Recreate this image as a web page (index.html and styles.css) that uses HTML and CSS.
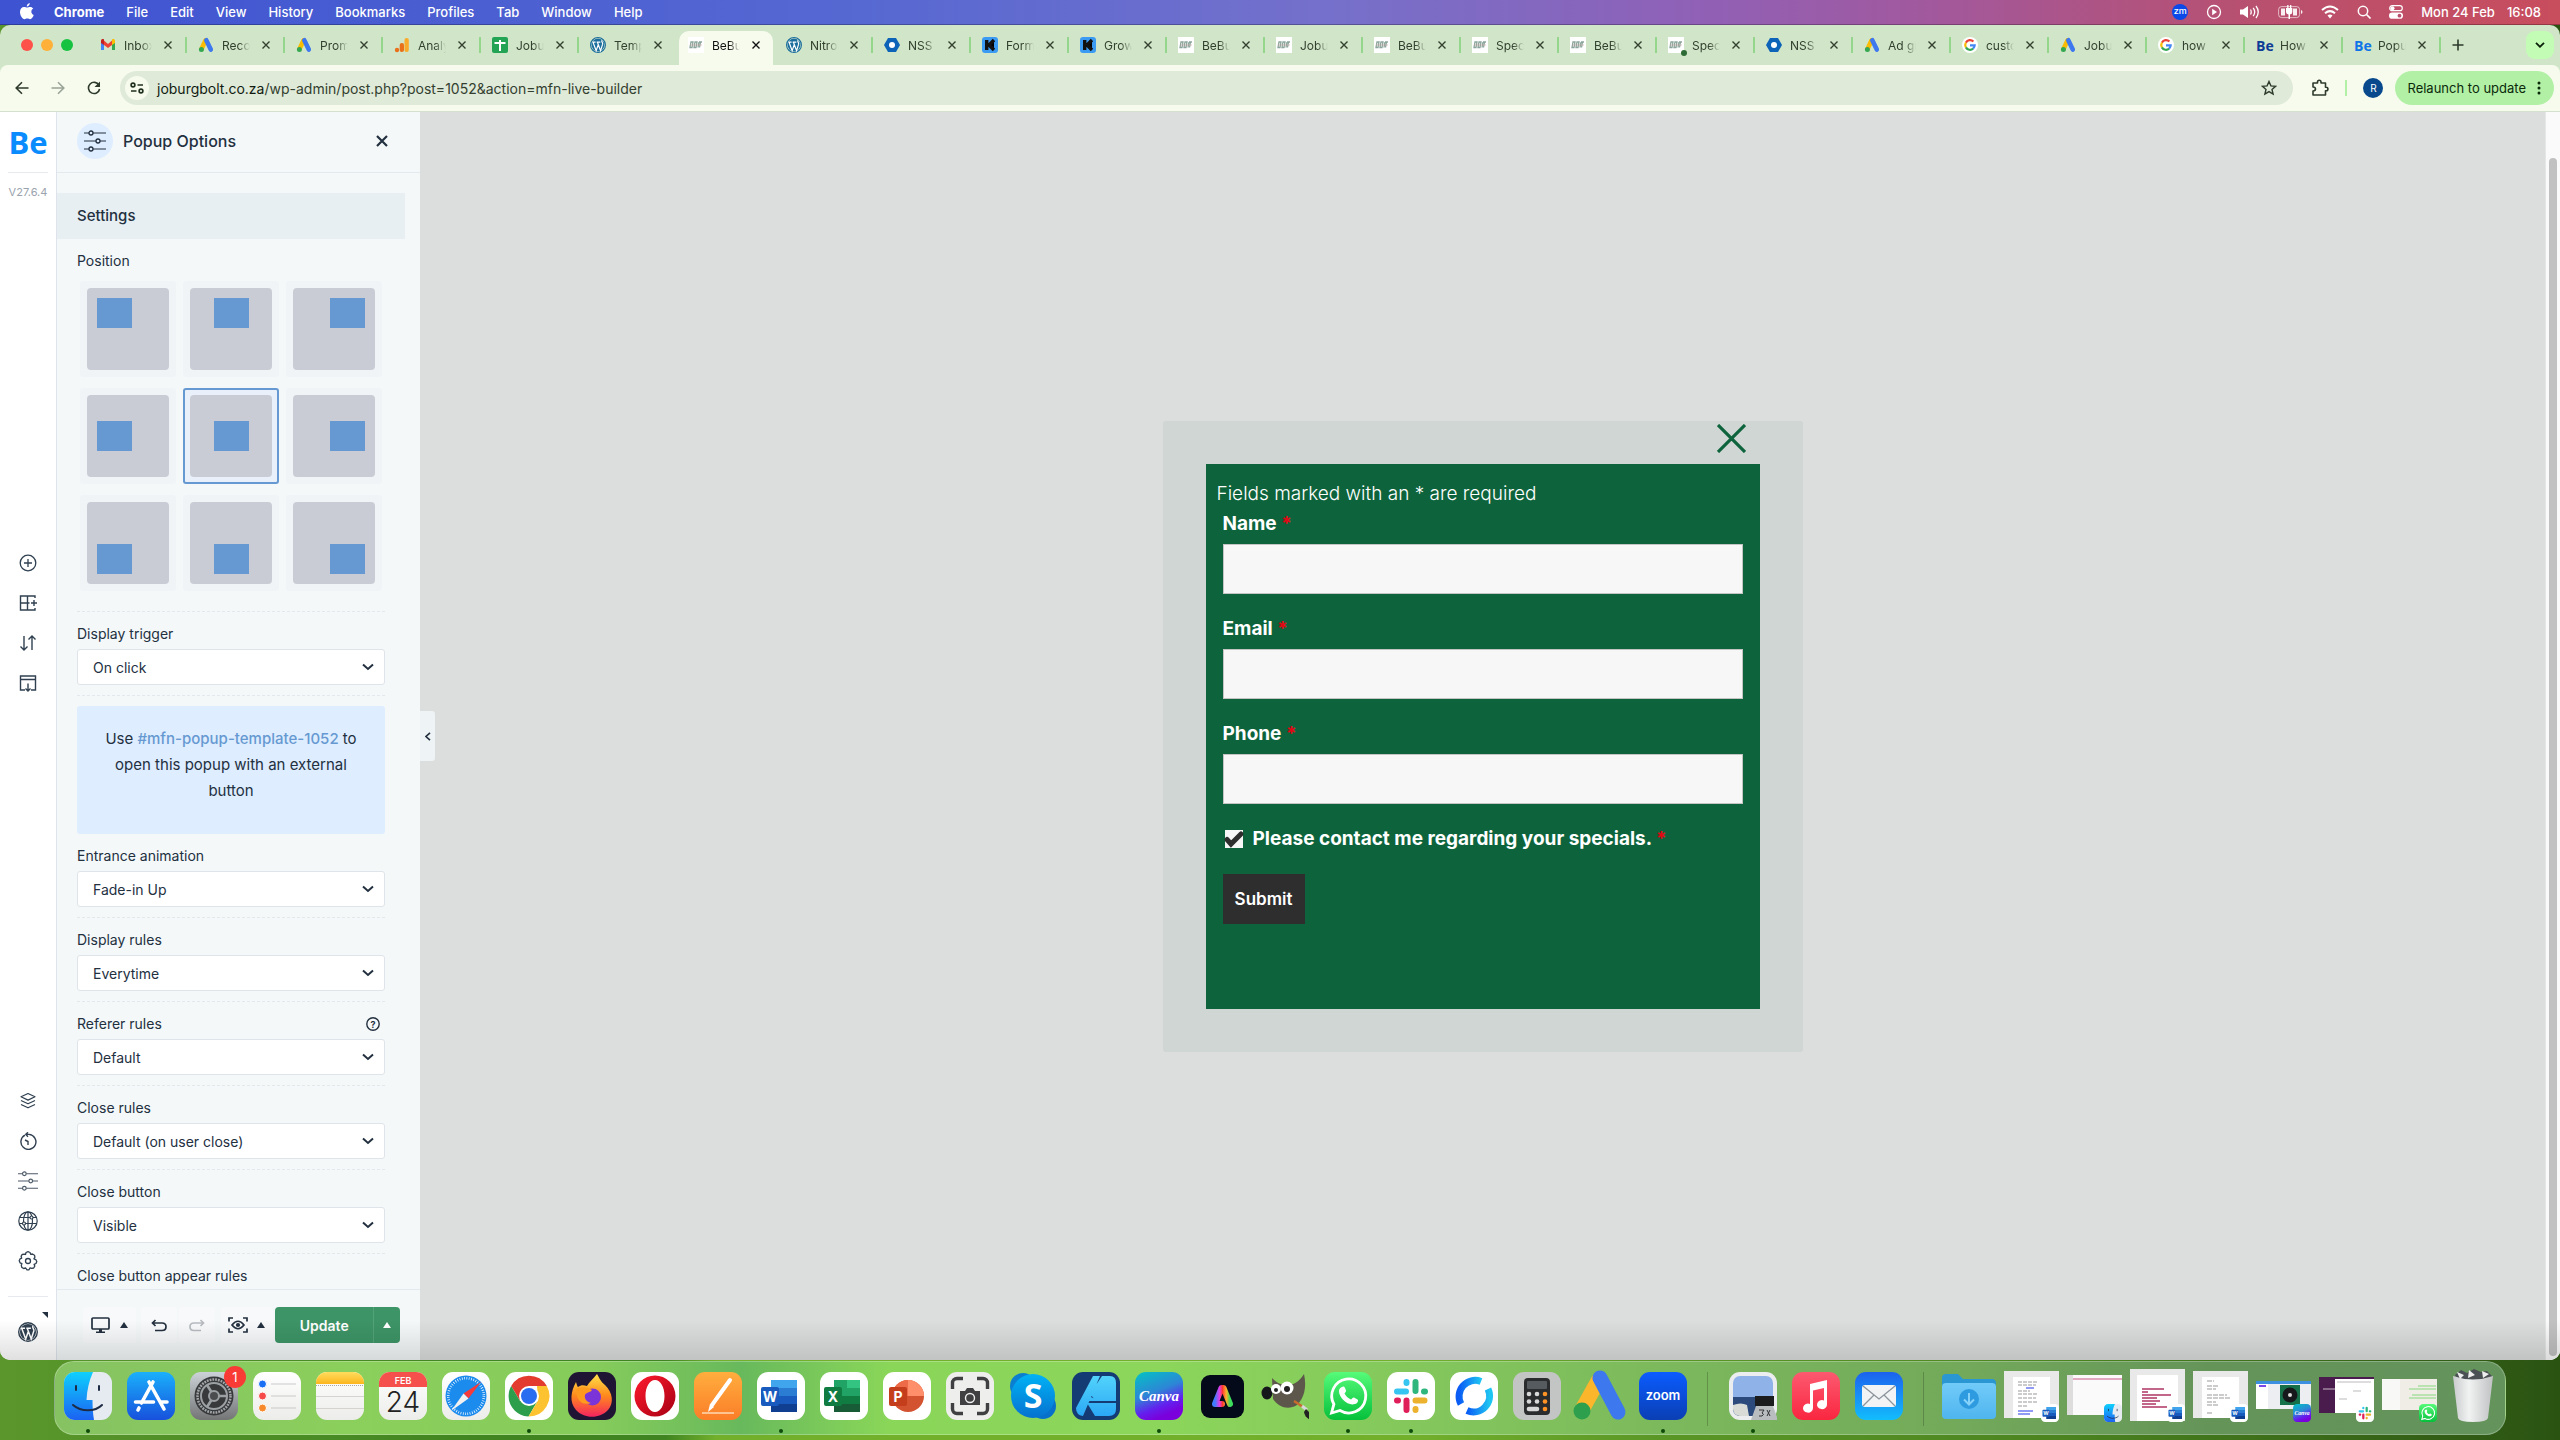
FILE: index.html
```html
<!DOCTYPE html>
<html lang="en">
<head>
<meta charset="utf-8">
<title>BeBuilder - Popup Options</title>
<link rel="stylesheet" href="styles.css">
</head>
<body>
<svg class="defs" aria-hidden="true">
  <defs>
    <linearGradient id="gFinder" x2="0" y2="1"><stop stop-color="#0fd0fd"/><stop offset="1" stop-color="#1b62f2"/></linearGradient>
    <linearGradient id="gStore" x2="0" y2="1"><stop stop-color="#1ab0fb"/><stop offset="1" stop-color="#1751dd"/></linearGradient>
    <linearGradient id="gGrey" x2="0" y2="1"><stop stop-color="#ccd3d8"/><stop offset="1" stop-color="#737475"/></linearGradient>
    <linearGradient id="gPaper" x2="0" y2="1"><stop stop-color="#fff"/><stop offset="1" stop-color="#ececea"/></linearGradient>
    <linearGradient id="gYellow" x2="0" y2="1"><stop stop-color="#ffdc5e"/><stop offset="1" stop-color="#fcb71e"/></linearGradient>
    <linearGradient id="gFox" x2="0" y2="1"><stop stop-color="#ffe14a"/><stop offset=".5" stop-color="#ff8a1c"/><stop offset="1" stop-color="#f4235f"/></linearGradient>
    <linearGradient id="gOpera" x2="1" y2="1"><stop stop-color="#ff1b2d"/><stop offset="1" stop-color="#a70014"/></linearGradient>
    <linearGradient id="gPages" x2="0" y2="1"><stop stop-color="#ffae3e"/><stop offset="1" stop-color="#fb7d28"/></linearGradient>
    <linearGradient id="gSkype" x2="0" y2="1"><stop stop-color="#00b2f5"/><stop offset="1" stop-color="#0672d0"/></linearGradient>
    <linearGradient id="gAff" x2="0" y2="1"><stop stop-color="#52d3fb"/><stop offset="1" stop-color="#2ba8f5"/></linearGradient>
    <linearGradient id="gCanva" x2=".4" y2="1"><stop stop-color="#03c3c4"/><stop offset=".5" stop-color="#2d86d6"/><stop offset=".8" stop-color="#6320ee"/><stop offset="1" stop-color="#7a00dc"/></linearGradient>
    <linearGradient id="gExpress" x2="1" y2="0"><stop stop-color="#3f7bff"/><stop offset=".3" stop-color="#e23ce4"/><stop offset=".5" stop-color="#ff3a33"/><stop offset=".75" stop-color="#ffb02c"/><stop offset="1" stop-color="#3ddc5c"/></linearGradient>
    <linearGradient id="gWa" x2="0" y2="1"><stop stop-color="#56fb79"/><stop offset="1" stop-color="#05c03b"/></linearGradient>
    <linearGradient id="gRc" x2="1" y2="0"><stop stop-color="#0a5cf5"/><stop offset="1" stop-color="#1fc5f2"/></linearGradient>
    <linearGradient id="gZoom" x2="0" y2="1"><stop stop-color="#0b5cff"/><stop offset="1" stop-color="#0a3fb4"/></linearGradient>
    <linearGradient id="gMusic" x2="0" y2="1"><stop stop-color="#fc5a70"/><stop offset="1" stop-color="#fa2640"/></linearGradient>
    <linearGradient id="gMail" x2="0" y2="1"><stop stop-color="#1c62ee"/><stop offset="1" stop-color="#12bdfd"/></linearGradient>
    <linearGradient id="gFolder" x2="0" y2="1"><stop stop-color="#72cbf9"/><stop offset="1" stop-color="#4fb5ee"/></linearGradient>
    <linearGradient id="gTrash" x2="1" y2="0"><stop stop-color="#c9cbcc"/><stop offset=".4" stop-color="#f1f2f2"/><stop offset="1" stop-color="#bfc1c2"/></linearGradient>
  </defs>

  <symbol id="f-gmail" viewBox="0 0 16 16"><path fill="#4285f4" d="M1 4v9h3V7z"/><path fill="#34a853" d="M15 4v9h-3V7z"/><path fill="#ea4335" d="M4 3.500 8 7l4-3.500V8L8 11 4 8z"/><path fill="#c5221f" d="M1 4c0-2 2-2.500 3-1.500V8L1 6z"/><path fill="#fbbc04" d="M15 4c0-2-2-2.500-3-1.500V8l3-2z"/></symbol>
  <symbol id="f-ads" viewBox="0 0 16 16"><path stroke="#fbbc04" stroke-width="4.600" stroke-linecap="round" d="M7.500 3.500 3.500 12"/><path stroke="#3d78ee" stroke-width="4.600" stroke-linecap="round" d="M8.300 3.200 12.800 12.600"/><circle cx="3.400" cy="12.600" r="2.500" fill="#34a853"/></symbol>
  <symbol id="f-analytics" viewBox="0 0 16 16"><rect x="10.500" y="1" width="4.300" height="14" rx="2" fill="#f9ab2c"/><rect x="5.700" y="6" width="4.300" height="9" rx="2" fill="#e8711a"/><circle cx="3" cy="13" r="2.200" fill="#e8711a"/></symbol>
  <symbol id="f-sheets" viewBox="0 0 16 16"><rect width="16" height="16" rx="2" fill="#23a455"/><path stroke="#fff" stroke-width="2" d="M2.500 6h11M8 3v11"/></symbol>
  <symbol id="f-wp" viewBox="0 0 20 20"><circle cx="10" cy="10" r="9.300" fill="none" stroke="currentColor" stroke-width="1.400"/><circle cx="10" cy="10" r="8" fill="currentColor"/><path fill="none" stroke="#fff" stroke-width="1.500" d="M3 6.300h4M8.300 6.300h4.600M3.800 6.500 7.700 17 10.300 9.500M9.300 6.500 13.200 17 15.800 9c.5-2-2-3-.8-5"/></symbol>
  <symbol id="f-bolt" viewBox="0 0 16 16"><rect width="16" height="16" fill="#fff"/><path fill="none" stroke="#8aa59b" stroke-width="1.300" d="M2 10.500 3 5h2l-1 5.500zM6 10.500 7 5h2l-1 5.500zM10 10.500l1-5.500M11 5h3M12.500 5l-1 5.500"/><path stroke="#c9a6a6" stroke-width=".6" d="M2 8h12"/></symbol>
  <symbol id="f-nss" viewBox="0 0 16 16"><path fill="#0c63b8" d="M4 1h8l4 7-4 7H4L0 8z"/><circle cx="8" cy="8" r="3" fill="#fff"/></symbol>
  <symbol id="f-k" viewBox="0 0 16 16"><rect width="16" height="16" rx="3" fill="#3b9bf3"/><path stroke="#111" stroke-width="3.400" d="M4.700 3v10M12 3 7 8l5 5"/></symbol>
  <symbol id="f-google" viewBox="0 0 16 16"><circle cx="8" cy="8" r="8" fill="#fff"/><g fill="none" stroke-width="2.200"><path stroke="#ea4335" d="M3.900 5.600a4.700 4.700 0 0 1 7.500-1"/><path stroke="#fbbc04" d="M3.900 5.600a4.700 4.700 0 0 0 0 4.800"/><path stroke="#34a853" d="M3.900 10.400a4.700 4.700 0 0 0 7.200 1.200"/><path stroke="#4285f4" d="M8 8.300h4.700a4.700 4.700 0 0 1-1.600 3.300"/></g></symbol>
  <symbol id="i-x" viewBox="0 0 8 8"><path stroke="currentColor" stroke-width="1.400" d="m.5.500 7 7M7.500.500l-7 7"/></symbol>
  <symbol id="i-sliders" viewBox="0 0 22 22"><path stroke="currentColor" stroke-width="1.200" d="M0 3h5M9 3h13M0 11h12M16 11h6M0 19h5M9 19h13"/><g fill="none" stroke="currentColor" stroke-width="1.300"><circle cx="7" cy="3" r="2"/><circle cx="14" cy="11" r="2"/><circle cx="7" cy="19" r="2"/></g></symbol>
  <symbol id="i-up" viewBox="0 0 8 6"><path fill="currentColor" d="M4 0 8 6H0z"/></symbol>

  <symbol id="a-finder" viewBox="0 0 48 48"><rect width="48" height="48" rx="11" fill="#e6ebf2"/><path fill="url(#gFinder)" d="M11 0h18c-4 9-6 18-6.500 28h6c0 8 .5 14 1.500 20H11A11 11 0 0 1 0 37V11A11 11 0 0 1 11 0z"/><path fill="none" stroke="#1d2b45" stroke-width="2" stroke-linecap="round" d="M12 14v4M35 14v4M9 33c8 7 22 7 29 0"/></symbol>
  <symbol id="a-word" viewBox="0 0 48 48"><rect width="48" height="48" rx="11" fill="#fff"/><path fill="#41a5ee" d="M14 8h26v8H14z"/><path fill="#2b7cd3" d="M14 16h26v8H14z"/><path fill="#185abd" d="M14 24h26v8H14z"/><path fill="#103f91" d="M14 32h26v8H14z"/><rect x="4" y="15" width="18" height="19" rx="2" fill="#185abd"/><text x="13" y="29.500" text-anchor="middle" font-family="Inter" font-weight="700" font-size="14" fill="#fff">W</text></symbol>
  <symbol id="a-canva" viewBox="0 0 48 48"><rect width="48" height="48" rx="11" fill="url(#gCanva)"/><text x="24" y="29" text-anchor="middle" font-family="Liberation Serif" font-style="italic" font-weight="700" font-size="15" fill="#fff">Canva</text></symbol>
  <symbol id="a-wa" viewBox="0 0 48 48"><rect width="48" height="48" rx="11" fill="url(#gWa)"/><path fill="none" stroke="#fff" stroke-width="2.800" d="m7.500 41 2.400-8.800A17 17 0 1 1 16 38.500z"/><path fill="#fff" d="M18 15c1.500-1 2.500-.5 3 1l1 2.500c.3 1-.8 2-1.500 3 1.500 3 4 5 6.500 6 1-.8 2-2.500 3-2l3.500 2c1 .5.500 2.500-.5 3.500-7 5-18-4-18-12 0-2 1.500-3.500 3-4z"/></symbol>
  <symbol id="a-slack" viewBox="0 0 48 48"><rect width="48" height="48" rx="11" fill="#fff"/><g stroke-width="6" stroke-linecap="round"><path stroke="#36c5f0" d="M10 19.500h9M19.500 10v1"/><path stroke="#2eb67d" d="M28.500 10v9M38 19.500h-1"/><path stroke="#ecb22e" d="M28.500 28.500h9M28.500 38v-1"/><path stroke="#e01e5a" d="M19.500 28.500V38M10 28.500h1"/></g></symbol>
</svg>

<header class="menubar">
  <svg class="apple" viewBox="0 0 14 17" aria-label="Apple"><path fill="#fff" d="M9.800 0c.1 1.700-1.200 3.400-3 3.500C6.600 1.900 8.100.2 9.800 0zM7.200 4.600c.8 0 1.600-.7 3-.7 1.300 0 2.400.7 3 1.600-2.800 1.600-2.200 5.400.5 6.500-.6 1.800-2 4.200-3.600 4.200-1 0-1.500-.6-2.800-.6s-1.900.6-2.800.6C2.300 16.200 0 12.400 0 9c0-3.200 2-5 4-5 1.300 0 2.300.6 3.200.6z"/></svg>
  <nav class="menus">
    <b>Chrome</b><span>File</span><span>Edit</span><span>View</span><span>History</span><span>Bookmarks</span><span>Profiles</span><span>Tab</span><span>Window</span><span>Help</span>
  </nav>
  <div class="status">
    <span class="zm">zm</span>
    <svg width="16" height="16" viewBox="0 0 16 16"><circle cx="8" cy="8" r="6.500" fill="none" stroke="#fff" stroke-width="1.300"/><path fill="#fff" d="m6.200 4.800 4.800 3.200-4.800 3.200z"/></svg>
    <svg width="20" height="16" viewBox="0 0 20 16"><path fill="#fff" d="M0 5.500h3L8 2v12l-5-3.500H0z"/><path fill="none" stroke="#fff" stroke-width="1.300" d="M10.500 5.500q1.500 2.500 0 5M13.200 3.800q3 4.200 0 8.400M16 2q4.500 6 0 12"/></svg>
    <svg width="25" height="14" viewBox="0 0 25 14"><rect x=".6" y="1.600" width="21" height="11" rx="3" fill="none" stroke="#fff" stroke-opacity=".6"/><path fill="#fff" fill-opacity=".9" d="M3 3.500h4v7H3zM15 3.500h4v7h-4zM23 5v4q1.500-.5 1.500-2T23 5z"/><path fill="#fff" d="M9.200 0h1.300v3h1.500V0h1.300v3h1v4q0 2-2.300 2.500V14h-1.500V9.500Q8 9 8 7V3h1.200z"/></svg>
    <svg width="18" height="14" viewBox="0 0 18 14"><g fill="none" stroke="#fff" stroke-width="2"><path d="M1 5q8-7 16 0M4 8.300q5-4.300 10 0"/></g><path fill="#fff" d="M6.500 10.500q2.500-2 5 0L9 13.500z"/></svg>
    <svg width="14" height="14" viewBox="0 0 14 14"><circle cx="6" cy="6" r="4.700" fill="none" stroke="#fff" stroke-width="1.500"/><path stroke="#fff" stroke-width="1.600" d="m9.500 9.500 4 4"/></svg>
    <svg width="14" height="14" viewBox="0 0 14 14"><rect x=".7" y=".7" width="12.600" height="5" rx="2.500" fill="none" stroke="#fff" stroke-width="1.200"/><circle cx="3.500" cy="3.200" r="2" fill="#fff"/><rect y="7.500" width="14" height="6.300" rx="3.100" fill="#fff"/><circle cx="10.500" cy="10.700" r="1.900" fill="#b8506f"/></svg>
    <span class="clock"><span>Mon 24 Feb</span><span>16:08</span></span>
  </div>
</header>

<div class="window">
  <div class="tabstrip">
    <div class="lights"><i class="red"></i><i class="amber"></i><i class="green"></i></div>
    <div class="tabs" role="tablist">
      <div class="tab" role="tab"><svg><use href="#f-gmail"/></svg><span>Inbox</span><button aria-label="Close tab"><svg><use href="#i-x"/></svg></button></div>
      <div class="tab" role="tab"><svg><use href="#f-ads"/></svg><span>Recor</span><button aria-label="Close tab"><svg><use href="#i-x"/></svg></button></div>
      <div class="tab" role="tab"><svg><use href="#f-ads"/></svg><span>Promo</span><button aria-label="Close tab"><svg><use href="#i-x"/></svg></button></div>
      <div class="tab" role="tab"><svg><use href="#f-analytics"/></svg><span>Analyt</span><button aria-label="Close tab"><svg><use href="#i-x"/></svg></button></div>
      <div class="tab" role="tab"><svg><use href="#f-sheets"/></svg><span>Jobur</span><button aria-label="Close tab"><svg><use href="#i-x"/></svg></button></div>
      <div class="tab before" role="tab"><svg class="wpblue"><use href="#f-wp"/></svg><span>Templ</span><button aria-label="Close tab"><svg><use href="#i-x"/></svg></button></div>
      <div class="tab active" role="tab" aria-selected="true"><svg><use href="#f-bolt"/></svg><span>BeBui</span><button aria-label="Close tab"><svg><use href="#i-x"/></svg></button></div>
      <div class="tab" role="tab"><svg class="wpblue"><use href="#f-wp"/></svg><span>Nitro</span><button aria-label="Close tab"><svg><use href="#i-x"/></svg></button></div>
      <div class="tab" role="tab"><svg><use href="#f-nss"/></svg><span>NSS</span><button aria-label="Close tab"><svg><use href="#i-x"/></svg></button></div>
      <div class="tab" role="tab"><svg><use href="#f-k"/></svg><span>Forms</span><button aria-label="Close tab"><svg><use href="#i-x"/></svg></button></div>
      <div class="tab" role="tab"><svg><use href="#f-k"/></svg><span>Grow</span><button aria-label="Close tab"><svg><use href="#i-x"/></svg></button></div>
      <div class="tab" role="tab"><svg><use href="#f-bolt"/></svg><span>BeBui</span><button aria-label="Close tab"><svg><use href="#i-x"/></svg></button></div>
      <div class="tab" role="tab"><svg><use href="#f-bolt"/></svg><span>Jobur</span><button aria-label="Close tab"><svg><use href="#i-x"/></svg></button></div>
      <div class="tab" role="tab"><svg><use href="#f-bolt"/></svg><span>BeBui</span><button aria-label="Close tab"><svg><use href="#i-x"/></svg></button></div>
      <div class="tab" role="tab"><svg><use href="#f-bolt"/></svg><span>Speci</span><button aria-label="Close tab"><svg><use href="#i-x"/></svg></button></div>
      <div class="tab" role="tab"><svg><use href="#f-bolt"/></svg><span>BeBui</span><button aria-label="Close tab"><svg><use href="#i-x"/></svg></button></div>
      <div class="tab notify" role="tab"><svg><use href="#f-bolt"/></svg><span>Speci</span><button aria-label="Close tab"><svg><use href="#i-x"/></svg></button></div>
      <div class="tab" role="tab"><svg><use href="#f-nss"/></svg><span>NSS</span><button aria-label="Close tab"><svg><use href="#i-x"/></svg></button></div>
      <div class="tab" role="tab"><svg><use href="#f-ads"/></svg><span>Ad gr</span><button aria-label="Close tab"><svg><use href="#i-x"/></svg></button></div>
      <div class="tab" role="tab"><svg><use href="#f-google"/></svg><span>custo</span><button aria-label="Close tab"><svg><use href="#i-x"/></svg></button></div>
      <div class="tab" role="tab"><svg><use href="#f-ads"/></svg><span>Jobur</span><button aria-label="Close tab"><svg><use href="#i-x"/></svg></button></div>
      <div class="tab" role="tab"><svg><use href="#f-google"/></svg><span>how</span><button aria-label="Close tab"><svg><use href="#i-x"/></svg></button></div>
      <div class="tab" role="tab"><b class="be navy">Be</b><span>How</span><button aria-label="Close tab"><svg><use href="#i-x"/></svg></button></div>
      <div class="tab" role="tab"><b class="be">Be</b><span>Popup</span><button aria-label="Close tab"><svg><use href="#i-x"/></svg></button></div>
      <button class="newtab" aria-label="New tab"><svg width="12" height="12" viewBox="0 0 12 12"><path stroke="#2d3a2b" stroke-width="1.600" d="M6 .500v11M.500 6h11"/></svg></button>
    </div>
    <button class="tabmenu" aria-label="Search tabs"><svg width="10" height="6" viewBox="0 0 10 6"><path fill="none" stroke="#0a200a" stroke-width="1.800" d="m1 .8 4 4 4-4"/></svg></button>
  </div>

  <div class="toolbar">
    <div class="navs">
      <svg viewBox="0 0 14 14"><path fill="none" stroke="#2e3b2c" stroke-width="1.600" d="M13.500 7H1.500M7 1.200 1.200 7 7 12.800"/></svg>
      <svg viewBox="0 0 14 14"><path fill="none" stroke="#9ba498" stroke-width="1.600" d="M.500 7h12M7 1.200 12.800 7 7 12.800"/></svg>
      <svg viewBox="0 0 14 14"><path fill="none" stroke="#2e3b2c" stroke-width="1.600" d="M12 4.200A5.600 5.600 0 1 0 12.600 8"/><path fill="#2e3b2c" d="M13 .500V6H7.500z"/></svg>
    </div>
    <div class="urlbar">
      <span class="tune"><svg width="14" height="12" viewBox="0 0 14 12"><g fill="none" stroke="#20301e" stroke-width="1.600"><circle cx="3" cy="3" r="1.900"/><path d="M7.500 3H13M1 9h5.500"/><circle cx="11" cy="9" r="1.900"/></g></svg></span>
      <span class="url"><b>joburgbolt.co.za</b>/wp-admin/post.php?post=1052&amp;action=mfn-live-builder</span>
      <svg class="star" viewBox="0 0 16 16"><path fill="none" stroke="#2e3b2c" stroke-width="1.400" d="m8 1.500 1.900 4.400 4.700.4-3.600 3.100 1.100 4.700L8 11.600l-4.100 2.500L5 9.400 1.400 6.300l4.700-.4z"/></svg>
    </div>
    <svg class="ext" viewBox="0 0 18 18"><path fill="none" stroke="#2e3b2c" stroke-width="1.600" stroke-linejoin="round" d="M2 4h4.500V3a1.700 1.700 0 0 1 3.500 0v1h4.500v4.200h.7a1.700 1.700 0 0 1 0 3.500h-.7V16H2v-4q2.500-.2 2.500-2T2 8z"/></svg>
    <i class="bar"></i>
    <span class="avatar">R</span>
    <button class="relaunch">Relaunch to update <svg width="4" height="14" viewBox="0 0 4 14"><g fill="#0b2a0b"><circle cx="2" cy="2" r="1.500"/><circle cx="2" cy="7" r="1.500"/><circle cx="2" cy="12" r="1.500"/></g></svg></button>
  </div>

  <div class="page">
    <aside class="rail">
      <div class="belogo">Be</div>
      <div class="version">V27.6.4</div>
      <div class="tools">
        <button aria-label="Add"><svg width="18" height="18" viewBox="0 0 18 18"><g fill="none" stroke="#304050" stroke-width="1.300"><circle cx="9" cy="9" r="7.800"/><path d="M9 5v8M5 9h8"/></g></svg></button>
        <button aria-label="Sections"><svg width="18" height="18" viewBox="0 0 18 18"><path fill="none" stroke="#304050" stroke-width="1.400" d="M16 4V2H1.500v14H16v-2M8.500 2v14M1.500 9h9M12 9h6M15 6v6"/></svg></button>
        <button aria-label="Reorder"><svg width="18" height="18" viewBox="0 0 18 18"><path fill="none" stroke="#304050" stroke-width="1.400" d="M5 2v14M1.500 12.500 5 16l3.500-3.500M13 16V2M9.500 5.500 13 2l3.500 3.500"/></svg></button>
        <button aria-label="Templates"><svg width="18" height="18" viewBox="0 0 18 18"><path fill="none" stroke="#304050" stroke-width="1.400" d="M6 16H1.500V2h15v14H12M1.500 5.500h15M9 9.500V17M6.500 14.500 9 17l2.500-2.500"/></svg></button>
      </div>
      <div class="tools low">
        <button aria-label="Navigator"><svg width="18" height="18" viewBox="0 0 18 18"><path fill="none" stroke="#304050" stroke-width="1.200" stroke-linejoin="round" d="m9 1.500 7 3.300-7 3.300-7-3.300zM2 8.500l7 3.300 7-3.300M2 12.500l7 3.300 7-3.300"/></svg></button>
        <button aria-label="History"><svg width="18" height="18" viewBox="0 0 18 18"><path fill="none" stroke="#304050" stroke-width="1.400" d="M7 2.400h3a7.500 7.500 0 1 1-4 .8M9 .300 6.800 2.400 9 4.800M6 8l3 1.500V13"/></svg></button>
        <button aria-label="Options"><svg width="20" height="20" class="dim"><use href="#i-sliders"/></svg></button>
        <button aria-label="Global"><svg width="20" height="20" viewBox="0 0 20 20"><g fill="none" stroke="#304050" stroke-width="1.200"><circle cx="10" cy="10" r="9.200"/><ellipse cx="10" cy="10" rx="4.500" ry="9.200"/><path d="M10 1v18M2 6.500h16M1 12.500h18"/></g><g fill="#fff" stroke="#304050" stroke-width="1.200"><circle cx="13.500" cy="6.500" r="1.500"/><circle cx="6" cy="12.500" r="1.500"/></g></svg></button>
        <button aria-label="Settings"><svg width="20" height="20" viewBox="0 0 20 20"><g fill="none" stroke="#304050" stroke-width="1.300" stroke-linejoin="round"><path d="m8 1.500 2-.8 2 .8.700 1.800 1.700-.3 2.100 1.200.4 2-1 1.600 2 .9.900 1.800-.8 2-1.900.9.700 1.700-1.100 1.900-2.100.4-1.500-.6L11 18.800l-2 .1-1.300-1.900-2 .5-1.900-1.100-.5-2.100.6-1.600-1.800-.9-.9-2 .8-1.900 1.700-.8L3.100 5.300l1.100-1.900 2.100-.3 1.200.4z"/><circle cx="10" cy="10" r="2.500"/></g></svg></button>
      </div>
      <button class="wp" aria-label="WordPress"><svg width="20" height="20"><use href="#f-wp"/></svg></button>
    </aside>

    <section class="panel">
      <header class="panelhead">
        <span class="round"><svg width="22" height="22"><use href="#i-sliders"/></svg></span>
        <h1>Popup Options</h1>
        <button aria-label="Close panel"><svg width="12" height="12" viewBox="0 0 12 12"><path stroke="#23303f" stroke-width="2.200" d="m1 1 10 10M11 1 1 11"/></svg></button>
      </header>
      <div class="panelbody">
        <h2>Settings</h2>
        <fieldset class="position">
          <legend>Position</legend>
          <div class="tiles">
            <label class="t l"><input type="radio" name="pos" aria-label="Top left"><span><i></i></span></label>
            <label class="t c"><input type="radio" name="pos" aria-label="Top center"><span><i></i></span></label>
            <label class="t r"><input type="radio" name="pos" aria-label="Top right"><span><i></i></span></label>
            <label class="m l"><input type="radio" name="pos" aria-label="Center left"><span><i></i></span></label>
            <label class="m c"><input type="radio" name="pos" aria-label="Center" checked><span><i></i></span></label>
            <label class="m r"><input type="radio" name="pos" aria-label="Center right"><span><i></i></span></label>
            <label class="b l"><input type="radio" name="pos" aria-label="Bottom left"><span><i></i></span></label>
            <label class="b c"><input type="radio" name="pos" aria-label="Bottom center"><span><i></i></span></label>
            <label class="b r"><input type="radio" name="pos" aria-label="Bottom right"><span><i></i></span></label>
          </div>
        </fieldset>
        <div class="row"><label for="trigger">Display trigger</label><select id="trigger"><option>On click</option></select></div>
        <p class="info">Use <a href="#mfn-popup-template-1052">#mfn-popup-template-1052</a> to open this popup with an external button</p>
        <div class="row"><label for="anim">Entrance animation</label><select id="anim"><option>Fade-in Up</option></select></div>
        <div class="row"><label for="drules">Display rules</label><select id="drules"><option>Everytime</option></select></div>
        <div class="row"><div class="labelline"><label for="ref">Referer rules</label><svg width="14" height="14" viewBox="0 0 14 14"><circle cx="7" cy="7" r="6.200" fill="none" stroke="#23303f" stroke-width="1.400"/><text x="7" y="10.500" text-anchor="middle" font-family="Inter" font-weight="700" font-size="9" fill="#23303f">?</text></svg></div><select id="ref"><option>Default</option></select></div>
        <div class="row"><label for="crules">Close rules</label><select id="crules"><option>Default (on user close)</option></select></div>
        <div class="row"><label for="cbtn">Close button</label><select id="cbtn"><option>Visible</option></select></div>
        <div class="row"><label for="cappear">Close button appear rules</label><select id="cappear"><option>Default</option></select></div>
      </div>
      <footer class="panelfoot">
        <button class="tool wide" aria-label="Desktop view"><svg width="20" height="17" viewBox="0 0 20 17"><rect x="1" y="1" width="17" height="11" rx="1" fill="none" stroke="#23303f" stroke-width="1.700"/><path fill="#23303f" d="M8 12h3v2.500h3V16H5v-1.500h3z"/></svg><svg width="8" height="6"><use href="#i-up"/></svg></button>
        <button class="tool" aria-label="Undo"><svg width="16" height="13" viewBox="0 0 16 13"><path fill="none" stroke="#23303f" stroke-width="1.700" d="M4.500 1 1.500 4l3 3M1.500 4H11q4 0 4 3.700T11 11.500H4"/></svg></button>
        <button class="tool faded" aria-label="Redo"><svg width="16" height="13" viewBox="0 0 16 13"><path fill="none" stroke="#23303f" stroke-width="1.700" d="m11.500 1 3 3-3 3M14.500 4H5Q1 4 1 7.700t4 3.800h7"/></svg></button>
        <button class="tool wide" aria-label="Preview"><svg width="20" height="16" viewBox="0 0 20 16"><path fill="none" stroke="#23303f" stroke-width="1.700" d="M1 4.500V1h4M15 1h4v3.500M19 11.500V15h-4M5 15H1v-3.500M4 8q6-7.500 12 0-6 7.500-12 0z"/><circle cx="10" cy="8" r="2.100" fill="#23303f"/></svg><svg width="8" height="6"><use href="#i-up"/></svg></button>
        <div class="update"><button>Update</button><button aria-label="Update options"><svg width="8" height="6"><use href="#i-up"/></svg></button></div>
      </footer>
    </section>

    <main class="canvas">
      <button class="collapse" aria-label="Collapse panel"><svg width="6" height="9" viewBox="0 0 6 9"><path fill="none" stroke="#23303f" stroke-width="1.600" d="m5 .8-4 3.700 4 3.700"/></svg></button>
      <div class="popup">
        <div class="popuphead"><button aria-label="Close popup"><svg width="29" height="29" viewBox="0 0 29 29"><path stroke="#0d643c" stroke-width="3.200" d="m1 1 27 27M28 1 1 28"/></svg></button></div>
        <form class="form">
          <p>Fields marked with an * are required</p>
          <div class="field"><label for="name">Name <em>*</em></label><input id="name" type="text"></div>
          <div class="field"><label for="email">Email <em>*</em></label><input id="email" type="email"></div>
          <div class="field"><label for="phone">Phone <em>*</em></label><input id="phone" type="tel"></div>
          <div class="check"><input id="ok" type="checkbox" checked><label for="ok">Please contact me regarding your specials. <em>*</em></label></div>
          <button type="button" class="submit">Submit</button>
        </form>
      </div>
    </main>
    <div class="scroll"><i></i></div>
  </div>
</div>

<footer class="desk">
  <div class="dock">
    <div class="app on"><svg><use href="#a-finder"/></svg></div>
    <div class="app"><svg viewBox="0 0 48 48"><rect width="48" height="48" rx="11" fill="url(#gStore)"/><path stroke="#fff" stroke-width="3.600" stroke-linecap="round" d="M26 10 14.500 31M22 10l15 27M8.500 30h18M34 30h6M12 36l-1 2"/></svg></div>
    <div class="app"><svg viewBox="0 0 48 48"><rect width="48" height="48" rx="11" fill="url(#gGrey)"/><circle cx="24" cy="24" r="19.500" fill="#37393b"/><circle cx="24" cy="24" r="16.500" fill="none" stroke="#a3a6a9" stroke-width="2.500" stroke-dasharray="1.800 1"/><circle cx="24" cy="24" r="13" fill="none" stroke="#9da0a3" stroke-width="2"/><path stroke="#9da0a3" stroke-width="2.600" d="M24 24h13M24 24l-7-11M24 24l-7 11"/><circle cx="24" cy="24" r="5" fill="#4a4c4e" stroke="#9da0a3" stroke-width="2"/></svg><span class="badge">1</span></div>
    <div class="app"><svg viewBox="0 0 48 48"><rect width="48" height="48" rx="11" fill="url(#gPaper)"/><path stroke="#c9c9c9" stroke-width="1.200" d="M18 12h25M18 24h25M18 36h25"/><g stroke="#fff" stroke-width="1"><circle cx="9.500" cy="12" r="4" fill="#1a6ff5"/><circle cx="9.500" cy="24" r="4" fill="#f64a4a"/><circle cx="9.500" cy="36" r="4" fill="#f68a2c"/></g></svg></div>
    <div class="app"><svg viewBox="0 0 48 48"><rect width="48" height="48" rx="11" fill="url(#gPaper)"/><path fill="url(#gYellow)" d="M0 12v-1A11 11 0 0 1 11 0h26a11 11 0 0 1 11 11v1z"/><path stroke="#a9a79f" stroke-width="1" stroke-dasharray="1 1" d="M0 13.500h48"/><path stroke="#d4d3d0" d="M0 24.500h48M0 36.500h48"/></svg></div>
    <div class="app"><svg viewBox="0 0 48 48"><rect width="48" height="48" rx="11" fill="url(#gPaper)"/><path fill="#f5504b" d="M0 15v-4A11 11 0 0 1 11 0h26a11 11 0 0 1 11 11v4z"/><text x="24" y="12" text-anchor="middle" font-family="Inter" font-weight="600" font-size="9" fill="#fff">FEB</text><text x="24" y="40" text-anchor="middle" font-family="Inter" font-weight="300" font-size="28" fill="#222">24</text></svg></div>
    <div class="app"><svg viewBox="0 0 48 48"><rect width="48" height="48" rx="11" fill="url(#gPaper)"/><circle cx="24" cy="24" r="20.500" fill="#1c8bee"/><circle cx="24" cy="24" r="17.800" fill="none" stroke="#fff" stroke-width="2.600" stroke-dasharray=".7 1.630"/><path fill="#f6393a" d="M39 10 21.500 21.500l5 5z"/><path fill="#f1f1f1" d="M9 39l12.500-17.500 5 5z"/></svg></div>
    <div class="app on"><svg viewBox="0 0 48 48"><rect width="48" height="48" rx="11" fill="#fff"/><path fill="#e33b2e" d="M6.200 14A20.500 20.500 0 0 1 41.800 14H24L15 29z"/><path fill="#2d9e4c" d="M6.200 14a20.500 20.500 0 0 0 17.300 30.500L32.500 29H15z"/><path fill="#fdc22f" d="M41.800 14a20.500 20.500 0 0 1-18.300 30.500L33 28.500 32 14z"/><circle cx="24" cy="24" r="10" fill="#fff"/><circle cx="24" cy="24" r="8" fill="#2a6df0"/></svg></div>
    <div class="app"><svg viewBox="0 0 48 48"><rect width="48" height="48" rx="11" fill="#1f1433"/><path fill="url(#gFox)" d="M29 2c3 5 4 8 8 11 8 8 9 18 3 25-8 9-24 9-32 0C1 30 3 19 8 10c1 3 1 4 2 5 3-2 5-2 9-1 2-4 6-7 10-12z"/><circle cx="24.500" cy="25" r="8.500" fill="#7a34d8"/><path fill="#ff9a1f" d="M8 17c6-3 12-2 16 1-2 3-6 2-7 5-1 4 2 7 6 8-8 3-15-2-15-14z"/></svg></div>
    <div class="app"><svg viewBox="0 0 48 48"><rect width="48" height="48" rx="11" fill="#fff"/><path fill="url(#gOpera)" fill-rule="evenodd" d="M24 3.500a20.500 20.500 0 1 0 0 41 20.500 20.500 0 0 0 0-41zM24 8c5.500 0 9.500 7 9.500 16S29.500 40 24 40s-9.500-7-9.500-16S18.500 8 24 8z"/></svg></div>
    <div class="app"><svg viewBox="0 0 48 48"><rect width="48" height="48" rx="11" fill="url(#gPages)"/><path stroke="#fff" stroke-width="4" stroke-linecap="round" d="M36 8 18 33"/><path fill="#fff" d="m16 32 4 3-6 5z"/><path stroke="#ffd9b5" stroke-width="1.500" d="M8 41h32"/></svg></div>
    <div class="app on"><svg><use href="#a-word"/></svg></div>
    <div class="app"><svg viewBox="0 0 48 48"><rect width="48" height="48" rx="11" fill="#fff"/><path fill="#21a366" d="M14 8h13v16H14z"/><path fill="#33c481" d="M27 8h13v8H27z"/><path fill="#21a366" d="M27 16h13v8H27z"/><path fill="#107c41" d="M14 24h26v8H14z"/><path fill="#185c37" d="M14 32h26v8H14z"/><rect x="4" y="15" width="18" height="19" rx="2" fill="#107c41"/><text x="13" y="29.500" text-anchor="middle" font-family="Inter" font-weight="700" font-size="14" fill="#fff">X</text></svg></div>
    <div class="app"><svg viewBox="0 0 48 48"><rect width="48" height="48" rx="11" fill="#fff"/><circle cx="25" cy="24" r="16" fill="#d35230"/><path fill="#ed6c47" d="M9 24a16 16 0 0 1 16-16v16z"/><path fill="#ff8f6b" d="M25 8a16 16 0 0 1 16 16H25z"/><rect x="6" y="15" width="18" height="19" rx="2" fill="#c43e1c"/><text x="15" y="29.500" text-anchor="middle" font-family="Inter" font-weight="700" font-size="14" fill="#fff">P</text></svg></div>
    <div class="app"><svg viewBox="0 0 48 48"><rect width="48" height="48" rx="11" fill="#eeeeec"/><path fill="none" stroke="#404042" stroke-width="3.400" d="M6.500 17v-6a4.500 4.500 0 0 1 4.500-4.500h6M31 6.500h6a4.500 4.500 0 0 1 4.500 4.500v6M41.500 31v6a4.500 4.500 0 0 1-4.500 4.500h-6M17 41.500h-6A4.500 4.500 0 0 1 6.500 37v-6"/><path fill="#404042" d="M14 19h5l2-3h6l2 3h5v14H14z"/><circle cx="24" cy="26" r="4.500" fill="none" stroke="#eee" stroke-width="1.400"/></svg></div>
    <div class="app"><svg viewBox="0 0 48 48"><circle cx="14" cy="14" r="13" fill="#0a7fd0"/><circle cx="34" cy="34" r="13" fill="#0670ca"/><circle cx="24" cy="24" r="22" fill="url(#gSkype)"/><text x="24" y="36" text-anchor="middle" font-family="Open Sans" font-weight="700" font-size="34" fill="#fff">S</text></svg></div>
    <div class="app"><svg viewBox="0 0 48 48"><rect width="48" height="48" rx="11" fill="#153b75"/><path fill="url(#gAff)" d="M21 4h7L11 44q-7-1-7-8zM30 4h8q6 0 6 7v18H24l-6-7zM17 24l10 5H15zM15 31h29v6q0 7-7 7H23z"/></svg></div>
    <div class="app on"><svg><use href="#a-canva"/></svg></div>
    <div class="app"><svg viewBox="0 0 48 48"><rect x="3" y="3" width="43" height="43" rx="9" fill="#040a19"/><path fill="none" stroke="url(#gExpress)" stroke-width="6" stroke-linecap="round" stroke-linejoin="round" d="M24 32h-7l6.500-16h2L32 32"/></svg></div>
    <div class="app"><svg viewBox="0 0 48 48"><path fill="#5d574b" d="M11 6c4 4 8 7 14 7 8 0 13-3 18-11 3 14 0 24-7 31-8 5-18 3-24-6z"/><ellipse cx="6" cy="21" rx="5.500" ry="6.500" fill="#15171a"/><circle cx="15" cy="17" r="5" fill="#fff"/><circle cx="26" cy="16" r="6.500" fill="#fff"/><circle cx="15" cy="18" r="2" fill="#222"/><circle cx="26" cy="17" r="3" fill="#222"/><path stroke="#c86b2c" stroke-width="2.500" d="m33 29 9 6"/><path stroke="#d8d8d8" stroke-width="3" d="m41 34 5 4"/><path fill="#222" d="m45 37 4 4 1 7q-6-2-7-8z"/></svg></div>
    <div class="app on"><svg><use href="#a-wa"/></svg></div>
    <div class="app on"><svg><use href="#a-slack"/></svg></div>
    <div class="app"><svg viewBox="0 0 48 48"><rect width="48" height="48" rx="11" fill="#fff"/><g fill="none" stroke="url(#gRc)" stroke-width="7"><path d="M31 9.500A16 16 0 0 0 11 32"/><path d="M38 17A16 16 0 0 1 17 38.500"/></g></svg></div>
    <div class="app"><svg viewBox="0 0 48 48"><rect width="48" height="48" rx="11" fill="#c3c4c4"/><rect x="11" y="6" width="26" height="37" rx="4" fill="#2a2c2e"/><rect x="14" y="9" width="20" height="8" rx="1" fill="#565b60"/><g fill="#d8d8d8"><circle cx="16" cy="22" r="2.300"/><circle cx="24" cy="22" r="2.300"/><circle cx="16" cy="29.500" r="2.300"/><circle cx="24" cy="29.500" r="2.300"/><rect x="13.700" y="34.700" width="12.600" height="4.600" rx="2.300"/></g><g fill="#ff9224"><circle cx="32" cy="22" r="2.300"/><circle cx="32" cy="29.500" r="2.300"/><circle cx="32" cy="37" r="2.300"/></g></svg></div>
    <div class="app"><svg viewBox="0 0 48 48" class="bleed"><path stroke="#fbb62c" stroke-width="15" stroke-linecap="round" d="M22 9 7 36"/><path stroke="#3d78ee" stroke-width="15" stroke-linecap="round" d="m24 6 18 34"/><circle cx="6" cy="39" r="8.500" fill="#2ea04d"/></svg></div>
    <div class="app on"><svg viewBox="0 0 48 48"><rect width="48" height="48" rx="11" fill="url(#gZoom)"/><text x="24" y="28" text-anchor="middle" font-family="Inter" font-weight="600" font-size="13" fill="#fff">zoom</text></svg></div>
    <i class="split"></i>
    <div class="app on"><svg viewBox="0 0 48 48"><rect width="48" height="48" rx="11" fill="#ebedee"/><rect x="4" y="4" width="40" height="40" rx="7" fill="#8fb3e8"/><path fill="#2c4a7c" d="M4 25h40v12a7 7 0 0 1-7 7H11a7 7 0 0 1-7-7z"/><path fill="#d8dbd6" d="M4 33q8-3 14 0l2 11h-9a7 7 0 0 1-7-7z"/><path fill="#1b1c1e" d="M26 24h19v10H26z"/><path fill="#b9bdc0" d="M27 34h17l5 14H22z"/><path fill="none" stroke="#333" stroke-width="1" d="M30 38h5l-2 3q3 1 0 3h-3M38 38l3 6M41 38l-3 6"/></svg></div>
    <div class="app"><svg viewBox="0 0 48 48"><rect width="48" height="48" rx="11" fill="url(#gMusic)"/><path fill="#fff" d="M18 12 35 8v24.500a5 4.500 0 1 1-3-4V16l-11 2.500V36a5 4.500 0 1 1-3-4z"/></svg></div>
    <div class="app"><svg viewBox="0 0 48 48"><rect width="48" height="48" rx="11" fill="url(#gMail)"/><rect x="7" y="13" width="34" height="22" rx="3" fill="#f1f3f5"/><path fill="none" stroke="#8c949c" stroke-width="1.300" d="m8 14 16 13 16-13M8 34l11-11M40 34 29 23"/></svg></div>
    <i class="split"></i>
    <div class="app"><svg viewBox="0 0 48 48" class="bleed"><path fill="#2b97d2" d="M-3 6q0-4 4-4h12l5 5h29q4 0 4 4v8H-3z"/><rect x="-3" y="11" width="54" height="36" rx="4" fill="url(#gFolder)"/><circle cx="24" cy="27" r="10" fill="#2e9be0"/><path fill="none" stroke="#86d2fa" stroke-width="2" d="M24 21v11M19 27.500l5 5 5-5"/></svg></div>
    <div class="app mini"><svg viewBox="0 0 55 53"><path fill="#e9e9e9" d="M0 2h55v47H0z"/><path fill="#fff" d="M9 8h37v41H9z"/><path stroke="#999" stroke-width="1" stroke-dasharray="4 1" d="M14 13h20M14 16h18M14 22h12M14 25h20M14 29h18M14 33h20M14 37h10"/><path stroke="#6f7bf0" stroke-width="1.300" d="M14 42h15M14 45h12M22 19h8"/></svg><svg class="tag"><use href="#a-word"/></svg></div>
    <div class="app mini"><svg viewBox="0 0 55 53"><path fill="#fafafa" d="M0 6h55v40H0z"/><path fill="#ddd" d="M0 6h6v40H0z"/><path stroke="#d98cab" stroke-width="1.600" d="M6 10h49"/></svg><svg class="tag"><use href="#a-finder"/></svg></div>
    <div class="app mini"><svg viewBox="0 0 55 53"><path fill="#e9e9e9" d="M0 0h55v52H0z"/><path fill="#fff" d="M7 6h41v46H7z"/><path stroke="#c2668a" stroke-width="1.800" d="M12 20h22M12 23h6M12 26h29M12 29h15M12 32h18M12 35h14M12 38h25"/></svg><svg class="tag"><use href="#a-word"/></svg></div>
    <div class="app mini"><svg viewBox="0 0 55 53"><path fill="#e9e9e9" d="M0 2h55v47H0z"/><path fill="#fff" d="M9 8h37v41H9z"/><path stroke="#999" stroke-width="1" stroke-dasharray="5 1" d="M14 12h7M14 17h11M14 20h9M14 26h20M14 29h24M14 33h9M14 36h12M14 44h6"/></svg><svg class="tag"><use href="#a-word"/></svg></div>
    <div class="app mini"><svg viewBox="0 0 55 53"><path fill="#fff" d="M0 12h55v28H0z"/><path fill="#3d8fe0" d="M0 12h55v3H0z"/><path fill="#eceef2" d="M12 15h43v25H12z"/><path fill="#167049" d="M24 16h20v20H24z"/><circle cx="34" cy="26" r="7.500" fill="#16181c"/><circle cx="34" cy="26" r="2" fill="#ddd"/><path fill="#7a4ae8" d="M3 16h7v2H3z"/></svg><svg class="tag"><use href="#a-canva"/></svg></div>
    <div class="app mini"><svg viewBox="0 0 55 53"><path fill="#fff" d="M0 8h55v36H0z"/><path fill="#4a1c4d" d="M0 8h55v2H0zM0 8h16v36H0z"/><path stroke="#c8b8ca" d="M4 20h12"/><path stroke="#bbb" d="M18 13h34M34 22h8M20 30h8"/></svg><svg class="tag"><use href="#a-slack"/></svg></div>
    <div class="app mini"><svg viewBox="0 0 55 53"><path fill="#f0ede6" d="M0 10h55v31H0z"/><path fill="#f8f8f6" d="M0 10h18v31H0z"/><path stroke="#a9dfa0" stroke-width="1.500" d="M27 20h27M30 26h24M27 29h27M36 17h18"/></svg><svg class="tag"><use href="#a-wa"/></svg></div>
    <div class="app"><svg viewBox="0 0 48 48" class="bleed"><path fill="#4b5054" d="m6 3 6-5 6 3 7-4 7 3 6-1 5 5-4 5H9z"/><path fill="#eee" d="m8 0 7 3-4 4zM20-2l6 5-7 3zM33-1l7 3-6 4z"/><path fill="url(#gTrash)" d="M4 4q20 7 40 0l-5 42q-1 4-15 4T9 46z"/></svg></div>
  </div>
</footer>
</body>
</html>
```

FILE: styles.css
```css
* { box-sizing: border-box; }

body {
  margin: 0;
  height: 100vh;
  display: flex;
  flex-direction: column;
  overflow: hidden;
  font-family: Inter, "Liberation Sans", sans-serif;
  color: #23303f;
  background: linear-gradient(90deg, #5a962b 0%, #3f8420 20%, #3f8420 26%, #72b02c 28%, #72b02c 55%, #5a9626 65%, #4c8520 80%, #2a5312 100%);
}

button { font: inherit; color: inherit; border: 0; padding: 0; background: none; }
button svg { display: block; }
.defs { position: absolute; width: 0; height: 0; }

/* menu bar */
.menubar {
  flex: none;
  height: 25px;
  display: flex;
  align-items: center;
  padding: 0 19px 2px 20px;
  font-size: 13px;
  color: #fff;
  background: linear-gradient(90deg, #3e53d1 0%, #5568d2 33%, #7570cb 52%, #9160b5 67%, #a3589b 76%, #b8506f 88%, #c84d5d 100%);
  box-shadow: inset 0 -1px #0004;
}
.apple { width: 14px; height: 17px; margin-right: 20px; }
.menus { display: flex; gap: 22px; font-weight: 500; }
.status { margin-left: auto; display: flex; align-items: center; gap: 18px; font-weight: 500; }
.zm {
  width: 16px; height: 16px; border-radius: 8px;
  background: #0b49e8; font-size: 9px; line-height: 14px; text-align: center;
}
.clock { display: flex; gap: 12px; }

/* browser window */
.window {
  flex: 1;
  min-height: 0;
  display: flex;
  flex-direction: column;
  position: relative;
  overflow: hidden;
  border-radius: 10px;
  background: #d1e6c9;
}
.window::after {
  content: "";
  position: absolute;
  inset: auto 0 0;
  height: 40px;
  background: linear-gradient(#0000, #0000001f);
  pointer-events: none;
}
.tabstrip { flex: none; height: 40px; display: flex; align-items: center; padding-right: 6px; }
.lights { width: 89px; padding-left: 21px; display: flex; gap: 8px; flex: none; }
.lights i { width: 12px; height: 12px; border-radius: 6px; }
.red { background: #fe5149; }
.amber { background: #feb038; }
.green { background: #17c241; }
.tabs { flex: 1; min-width: 0; display: flex; align-items: center; align-self: stretch; position: relative; z-index: 0; }
.tab {
  flex: 0 1 98px;
  height: 40px;
  display: flex;
  align-items: center;
  padding-left: 11px;
  font-size: 12px;
  color: #33402f;
  position: relative;
}
.tab > svg { width: 16px; height: 16px; flex: none; margin-right: 8px; }
.tab > span {
  width: 28px; margin-right: 12px; overflow: hidden; white-space: nowrap;
  mask-image: linear-gradient(90deg, #000 60%, transparent);
}
.tab button svg { width: 8px; height: 8px; }
.tab::after { content: ""; position: absolute; right: 0; width: 2px; height: 16px; background: #95d68d; }
.tab.before::after, .tab.active::after { display: none; }
.tab.active {
  height: 34px;
  align-self: flex-end;
  padding: 0 0 6px 11px;
  color: #111;
  background: linear-gradient(#f7fbee, #f7fbee) center bottom / 94px 20px no-repeat;
}
.tab.active::before {
  content: ""; position: absolute; inset: 0 2px; z-index: -1;
  border-radius: 10px 10px 0 0; background: #f7fbee;
}
.tab.notify::before {
  content: ""; position: absolute; left: 24px; top: 25px;
  width: 6px; height: 6px; border-radius: 3px; background: #2d6a35;
}
.wpblue { color: #1c6e9e; }
.be { width: 24px; flex: none; font: 700 14px "Open Sans", sans-serif; color: #0f74e8; }
.navy { color: #0d3c96; }
.newtab { margin-left: 11px; }
.tabmenu {
  width: 28px; height: 28px; border-radius: 9px; background: #c3fcb4;
  display: grid; place-items: center;
}
.toolbar {
  flex: none;
  height: 47px;
  display: flex;
  align-items: center;
  padding: 0 6px 0 15px;
  background: #f7fbee;
  border-bottom: 1px solid #d5e0cf;
  border-radius: 8px 8px 0 0;
}
.navs { display: flex; gap: 22px; margin-right: 19px; }
.navs svg { width: 14px; height: 14px; }
.urlbar {
  flex: 1;
  height: 34px;
  border-radius: 17px;
  background: #dfead9;
  display: flex;
  align-items: center;
  padding: 0 16px 0 5px;
}
.tune {
  width: 24px; height: 24px; border-radius: 12px; background: #f7fbee;
  display: grid; place-items: center; margin-right: 8px;
}
.url { font-size: 14px; color: #33402f; }
.url b { font-weight: 400; color: #111b10; }
.star { width: 16px; height: 16px; margin-left: auto; }
.ext { width: 18px; height: 18px; margin-left: 18px; }
.bar { width: 2px; height: 16px; background: #b2f0a5; margin: 0 16px; }
.avatar {
  width: 20px; height: 20px; border-radius: 10px; background: #07498c; color: #fff;
  font-size: 10px; line-height: 20px; text-align: center; margin-right: 12px;
}
.relaunch {
  height: 34px; border-radius: 17px; background: #b2f0a5; color: #0b2a0b;
  padding: 0 13px 0 12px; font-size: 13px; display: flex; align-items: center; gap: 11px;
}

/* builder */
.page { flex: 1; min-height: 0; display: flex; background: #fff; }
.rail {
  flex: none;
  width: 57px;
  border-right: 1px solid #dfe4ec;
  display: flex;
  flex-direction: column;
  align-items: center;
}
.belogo {
  width: 40px; height: 61px; line-height: 60px; text-align: center;
  font-family: "Open Sans", sans-serif; font-weight: 700; font-size: 31px;
  color: #0a8cff; border-bottom: 1px solid #e6e9ee;
}
.version { margin-top: 11px; font-size: 11px; line-height: 16px; color: #9aa3ad; }
.tools { display: flex; flex-direction: column; margin-top: auto; }
.tools button { width: 40px; height: 40px; display: grid; place-items: center; }
.low { padding-bottom: 15px; border-bottom: 1px solid #e6e9ee; margin-top: 378px; }
.dim { color: #4d5a68; }
.wp { width: 40px; height: 63px; padding-top: 6px; display: grid; place-items: center; position: relative; color: #304050; }
.wp::before {
  content: ""; position: absolute; right: 0; top: 15px;
  border-top: 6px solid #23303f; border-left: 6px solid transparent;
}
.panel { flex: none; width: 363px; display: flex; flex-direction: column; background: #f4f8f9; }
.panelhead {
  flex: none; height: 61px; display: flex; align-items: center;
  padding: 0 32px 2px 20px; border-bottom: 1px solid #e2eaf0;
}
.round { width: 36px; height: 36px; border-radius: 18px; background: #deedff; display: grid; place-items: center; margin-right: 10px; }
h1 { margin: 0; font-size: 16px; font-weight: 500; flex: 1; }
.panelbody { flex: 1; min-height: 0; overflow: hidden; padding: 20px 35px 0 20px; }
h2 {
  margin: 0 -20px; padding-left: 20px; width: 348px;
  font-size: 15px; line-height: 46px; font-weight: 500; background: #e7eff3;
}
.position { margin: 0; padding: 10px 0 20px; border: 0; border-bottom: 1px dashed #e2e8ec; min-width: 0; }
.position legend { float: left; padding: 0; width: 100%; font-size: 14px; line-height: 24px; margin-bottom: 8px; }
.tiles { clear: both; display: grid; grid-template-columns: repeat(3, 96px); gap: 11px 7px; padding: 0 3px; }
.tiles label { height: 96px; padding: 7px; border-radius: 3px; background: #f0f4f7; position: relative; }
.tiles label:has(:checked) { box-shadow: inset 0 0 0 2px #6699d1; background: #e9f0fa; }
.tiles input { position: absolute; opacity: 0; margin: 0; }
.tiles label > span { height: 82px; display: flex; border-radius: 4px; background: #c9ccd4; padding: 10px; }
.tiles i { width: 35px; height: 30px; background: #6699d1; }
.t > span { align-items: flex-start; }
.m > span { align-items: center; }
.b > span { align-items: flex-end; }
.c > span { justify-content: center; }
.r > span { justify-content: flex-end; }
.row { display: flex; flex-direction: column; gap: 3px; padding: 10px 0; border-bottom: 1px dashed #e2e8ec; }
.row label { font-size: 14px; line-height: 24px; }
.labelline { display: flex; justify-content: space-between; align-items: center; padding-right: 5px; }
select {
  appearance: none; height: 36px; border: 1px solid #dfe4ea; border-radius: 3px;
  padding: 0 15px; font: 14px Inter, sans-serif; color: #23303f;
  background: #fff url("data:image/svg+xml,%3Csvg xmlns='http://www.w3.org/2000/svg' width='12' height='8'%3E%3Cpath fill='none' stroke='%2323303f' stroke-width='2' d='m1 1.500 5 4.500 5-4.500'/%3E%3C/svg%3E") right 10px center no-repeat;
}
.info {
  margin: 10px 0 0; padding: 20px 24px 30px; border-radius: 3px; background: #deedff;
  font-size: 15px; line-height: 26px; text-align: center;
}
.info a { color: #6699d1; text-decoration: none; font-weight: 500; }
.panelfoot {
  flex: none; height: 71px; display: flex; align-items: center; gap: 2px;
  padding: 0 20px 0 26px; border-top: 1px solid #e2eaf0;
}
.tool { width: 36px; height: 36px; border-radius: 3px; background: #f8f9fa; display: flex; align-items: center; justify-content: center; gap: 9px; }
.wide { width: 53px; }
.wide + .tool { margin-left: 3px; }
.tool + .wide { margin-left: 4px; }
.faded svg { opacity: .3; }
.update { margin-left: auto; display: flex; height: 36px; border-radius: 4px; overflow: hidden; background: #3d9466; color: #fff; font-size: 14px; font-weight: 600; }
.update button { width: 98px; }
.update button + button { width: 27px; border-left: 1px solid #53a378; display: grid; place-items: center; }

/* canvas */
.canvas { flex: 1; min-width: 0; position: relative; display: grid; place-items: center; background: #dcdedd; }
.collapse {
  position: absolute; left: 0; top: calc(50% - 25px); width: 15px; height: 50px;
  background: #eef3f5; border-radius: 0 3px 3px 0; display: grid; place-items: center;
}
.popup { width: 640px; padding: 0 43px 43px; background: #d0d6d3; border-radius: 3px; }
.popuphead { height: 43px; padding: 3px 14px 0 0; display: flex; justify-content: flex-end; align-items: flex-start; }
.form { min-height: 545px; padding: 16px 17px; background: #0d643c; color: #fff; font-size: 19px; line-height: 28px; }
.form p { margin: 0 -6px 2px; font-weight: 300; }
.form em { color: #e30613; font-style: normal; }
.form label { font-weight: 700; }
.field { display: flex; flex-direction: column; gap: 6px; margin-bottom: 21px; }
.field input { height: 50px; border: 1px solid #c4c4c4; background: #f7f7f7; padding: 0 12px; font: inherit; }
.check { display: flex; align-items: center; gap: 8px; margin-bottom: 21px; }
.check input {
  appearance: none; margin: 0; width: 22px; height: 20px;
  background: url("data:image/svg+xml,%3Csvg xmlns='http://www.w3.org/2000/svg' width='22' height='20'%3E%3Cpath fill='%23f7f7f7' d='M2 1h18v18H2z'/%3E%3Cpath fill='none' stroke='%232e2e2e' stroke-width='5' stroke-linecap='round' d='m4 10.500 4 4.500 10-10'/%3E%3C/svg%3E") no-repeat;
}
.submit { width: 82px; height: 50px; background: #2e2e2e; font-size: 17px; font-weight: 600; }
.scroll { flex: none; width: 15px; background: #fafafa; border-left: 1px solid #e6e6e6; padding: 46px 3px 4px; display: flex; }
.scroll i { flex: 1; border-radius: 4px; background: #c1c1c1; }

/* dock */
.desk { flex: none; height: 80px; padding-top: 1px; display: flex; justify-content: center; align-items: flex-start; }
.dock {
  height: 74px; display: flex; border-radius: 20px; padding: 10px 1px 0;
  border: 1px solid #ffffff40;
  background: linear-gradient(90deg, #86c262 0%, #8bcf5c 12%, #86cc5b 22%, #68b95c 28%, #8ad659 34%, #8cd65b 45%, #84c85c 55%, #7bb75c 67%, #72a95a 78%, #659459 88%, #64935c 100%);
}
.app { width: 63px; display: flex; flex-direction: column; align-items: center; position: relative; }
.app > svg { width: 48px; height: 48px; flex: none; }
.app .bleed { overflow: visible; }
.on::after { content: ""; width: 4px; height: 4px; border-radius: 2px; background: #0d4a0a; margin-top: 9px; }
.split { width: 27px; height: 54px; background: linear-gradient(#0003, #0003) center / 1px 100% no-repeat; }
.badge {
  position: absolute; right: -1px; top: -6px; width: 22px; height: 22px; border-radius: 11px;
  background: #f93b36; color: #fff; font-size: 13px; line-height: 22px; text-align: center;
}
.mini > svg { width: 55px; height: 53px; margin-top: -3px; }
.app .tag { position: absolute; right: 4px; bottom: 12px; width: 18px; height: 18px; margin: 0; }
```
